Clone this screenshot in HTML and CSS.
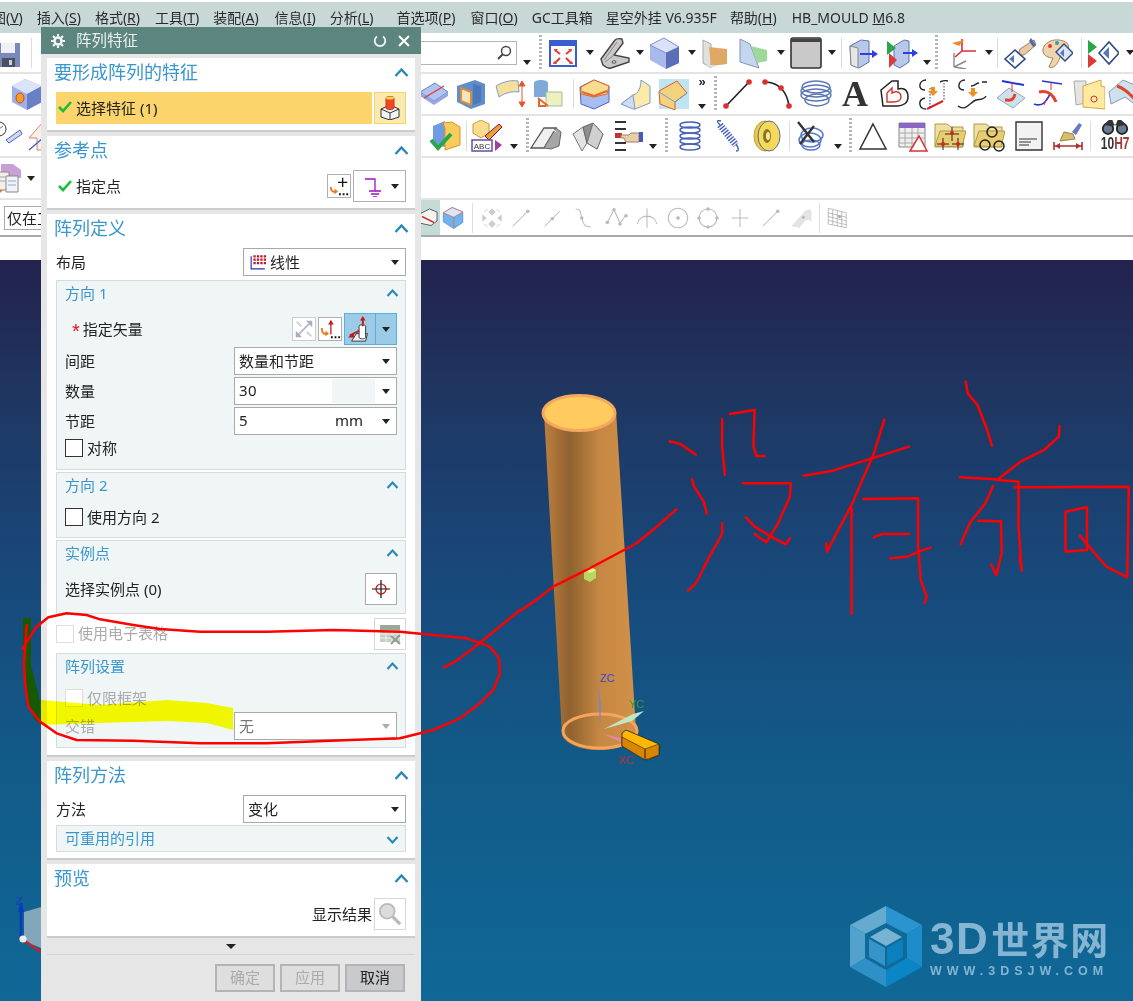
FILE: index.html
```html
<!DOCTYPE html>
<html lang="zh">
<head>
<meta charset="utf-8">
<title>阵列特征</title>
<link rel="stylesheet" href="styles.css">
</head>
<body>
<svg class="defs" width="0" height="0">
<defs>
<linearGradient id="cyl" x1="0" x2="1" y1="0" y2="0"><stop offset="0" stop-color="#bd803f"/><stop offset=".28" stop-color="#90622f"/><stop offset=".6" stop-color="#c58743"/><stop offset="1" stop-color="#d29149"/></linearGradient>
<symbol id="save" viewBox="0 0 32 32"><path d="M6 6h24v24H6z" fill="#7b89b8"/><path d="M11 6h14v10H11z" fill="#eef0f5"/><path d="M12 21h13v9H12z" fill="#4a4f62"/><path d="M19 23h3v5h-3z" fill="#cfd3de"/></symbol>
<symbol id="fit" viewBox="0 0 32 32"><rect x="3" y="4" width="26" height="25" fill="#f8fafe" stroke="#3b5bd0" stroke-width="2"/><path d="M3 5h26v4H3z" fill="#3b5bd0"/><path d="M8 13l5 4M24 13l-5 4M8 26l5-5M24 26l-5-5" stroke="#e0432c" stroke-width="2"/><path d="M7 12h4l-3 3zM25 12h-4l3 3zM6 27h4l-3-3zM26 27h-4l3-3z" fill="#e0432c"/></symbol>
<symbol id="bracket" viewBox="0 0 32 32"><path d="M2 22L16 3q2-2 7-1l1 4-9 12 15 3v4L12 31q-3 1-8-3z" fill="#c9c9c9" stroke="#444" stroke-width="1.400"/><path d="M5 23L18 5M6 25l9-7" fill="none" stroke="#8a8a8a"/><ellipse cx="15" cy="25" rx="2" ry="1.200" fill="#fff" stroke="#444"/></symbol>
<symbol id="cube" viewBox="0 0 32 32"><path d="M15 1L30 10v16l-13 6L1 23V8z" fill="#a9b9ea"/><path d="M1 8l14-7 15 9-13 6z" fill="#d9e2f8" stroke="#6c80c8" stroke-width=".8"/><path d="M17 16l13-6v16l-13 6z" fill="#5a6fb6"/></symbol>
<symbol id="sec1" viewBox="0 0 32 32"><path d="M4 3l8 4v24l-8-5z" fill="#e0e0e0" stroke="#aaa"/><path d="M10 10l18 2v15l-16 2z" fill="#dfa864"/><path d="M12 31l-6-3h14z" fill="#ddd"/></symbol>
<symbol id="sec2" viewBox="0 0 32 32"><path d="M3 2l10 5 9 24-19-6z" fill="#c4d6ee" stroke="#7f95c0"/><path d="M14 9l16 4v11l-10 2z" fill="#9ed99a"/></symbol>
<symbol id="sq" viewBox="0 0 32 32"><rect x="1" y="1" width="30" height="30" rx="2" fill="#c9c9c9" stroke="#333" stroke-width="1.600"/><path d="M1 2h30v3H1z" fill="#444"/></symbol>
<symbol id="mv1" viewBox="0 0 32 32"><path d="M3 9l11-6 8 1v21l-10 6-8-3z" fill="#b7c8ea" stroke="#5d74b2"/><path d="M3 9l8 2v20l-7-3z" fill="#e6e6e6" stroke="#888"/><path d="M13 17h13" stroke="#2c3fe0" stroke-width="2"/><path d="M25 13l6 4-6 4z" fill="#2c3fe0"/></symbol>
<symbol id="mv2" viewBox="0 0 32 32"><path d="M8 9l10-6 5 1v21l-9 6-6-3z" fill="#b7c8ea" stroke="#5d74b2"/><path d="M1 4l9 7-9 7z" fill="#2aa64a"/><path d="M3 16l8 7-8 8z" fill="#d83b3b"/><path d="M17 16h10" stroke="#2c3fe0" stroke-width="2"/><path d="M26 12l6 4-6 4z" fill="#2c3fe0"/></symbol>
<symbol id="csys" viewBox="0 0 32 32"><path d="M16 14V2M16 14l14 0M16 14l-7 6" stroke="#d83030" stroke-width="1.600" fill="none"/><path d="M6 6l12-3-5 6z" fill="#ee8a2c"/><path d="M8 30V16M8 30l12-6M8 30l12 2" stroke="#8a8a8a" stroke-width="1.400" fill="none"/></symbol>
<symbol id="hand" viewBox="0 0 32 32"><path d="M16 12l14-9 2 5-12 10h-6z" fill="#e8c9a4" stroke="#9a7f60"/><path d="M27 1l5 7-3 2-4-6z" fill="#5068b0"/><path d="M1 22l10-9 10 9-10 9z" fill="#fff" stroke="#30497f" stroke-width="1.600"/><path d="M10 18l-5 4 5 4z" fill="#5478c0"/></symbol>
<symbol id="pal" viewBox="0 0 32 32"><path d="M2 12C4 3 18 0 26 6c4 4 0 12-6 12-3 8-6 14-12 12l4-9C7 21 1 18 2 12z" fill="#efd5ac" stroke="#9d8659"/><circle cx="9" cy="9" r="2" fill="#e33"/><circle cx="16" cy="6" r="2" fill="#39c"/><circle cx="22" cy="9" r="2" fill="#ec3"/><path d="M15 15l8-8 9 9-8 8z" fill="#dce6f5" stroke="#30497f" stroke-width="1.400"/><path d="M23 12l-4 4 4 4z" fill="#5478c0"/></symbol>
<symbol id="dia" viewBox="0 0 32 32"><path d="M1 3l9 7-9 7z" fill="#2aa64a"/><path d="M1 17l9 7-9 7z" fill="#d83b3b"/><path d="M12 16L22 5l10 11-10 11z" fill="#fff" stroke="#30497f" stroke-width="1.600"/><path d="M22 10l-6 6 6 6z" fill="#5478c0"/></symbol>
<symbol id="holecube" viewBox="0 0 32 32"><path d="M14 1l17 7v16l-15 8L1 24V8z" fill="#9eb1e6"/><path d="M1 8l13-7 17 7-15 8z" fill="#dbe3f8"/><path d="M16 16l15-8v16l-15 8z" fill="#6a80c4"/><ellipse cx="9" cy="20" rx="4" ry="5" fill="#f0a020" stroke="#d8452a"/></symbol>
<symbol id="plane" viewBox="0 0 32 32"><path d="M2 14L17 5l13 9-14 9z" fill="#b2c3ee" stroke="#6d82c6"/><path d="M2 14v4l14 9v-4zM30 14v4l-14 9v-4z" fill="#93a8e0"/><path d="M6 20l20-12" stroke="#d83b3b" stroke-width="1.400"/></symbol>
<symbol id="frame" viewBox="0 0 32 32"><path d="M2 8l18-6 10 4v20l-14 5L2 24z" fill="#5f8ecb"/><path d="M6 10l10 4v13L6 23z" fill="#f6e6c0" stroke="#dc8b3e" stroke-width="2"/><path d="M18 6l8 2v16l-8 3z" fill="#4a78b8"/></symbol>
<symbol id="strip" viewBox="0 0 32 32"><path d="M2 8c8-5 16-6 22-5l1 11C17 13 11 15 5 19z" fill="#f3e09a" stroke="#7f9bcf"/><path d="M28 5v22M25 8l3-5 3 5zM25 24l3 5 3-5z" stroke="#e4572e" fill="#e4572e"/></symbol>
<symbol id="cylb" viewBox="0 0 32 32"><path d="M2 5c0-4 14-4 14 0v14H2z" fill="#7fa9d8"/><path d="M14 14h16v14H14z" fill="#eef0bf" stroke="#9bbf9b"/><path d="M6 20l10 8M14 28h-7v-7" stroke="#e4672e" stroke-width="2" fill="none"/></symbol>
<symbol id="blend" viewBox="0 0 32 32"><path d="M1 9L15 2l15 6v16l-15 7L2 26z" fill="#a8bdf0" stroke="#4a67c4"/><path d="M2 9l13-7 15 6-2 8-13 3-13-3z" fill="#f9dc8c" stroke="#e0672e"/><path d="M3 14l12 4 13-5" stroke="#e0672e" fill="none" stroke-width="2"/></symbol>
<symbol id="sweep" viewBox="0 0 32 32"><path d="M2 26l12-9C20 16 22 8 22 2l9 6v17l-15 6z" fill="#fbeaa8" stroke="#7c9ad0"/><path d="M2 26l12 5h2l-2-14z" fill="#cfdcf5" stroke="#7c9ad0"/></symbol>
<symbol id="boxc" viewBox="0 0 32 32"><path d="M1 1h30v30H1z" fill="#bfe4f2"/><path d="M1 13L19 3l10 12-12 9v8L2 26z" fill="#f1d37e" stroke="#dd5c2e"/><path d="M1 14l16 10 12-9" stroke="#7c9ad0" fill="none"/></symbol>
<symbol id="line" viewBox="0 0 32 32"><path d="M4 28L27 4" stroke="#222" stroke-width="1.600"/><circle cx="4" cy="28" r="2.800" fill="#d83030"/><circle cx="27" cy="4" r="2.800" fill="#d83030"/></symbol>
<symbol id="arc" viewBox="0 0 32 32"><path d="M4 4c14 0 22 10 24 24" stroke="#222" stroke-width="1.600" fill="none"/><circle cx="4" cy="4" r="2.800" fill="#d83030"/><circle cx="20" cy="10" r="2.800" fill="#d83030"/><circle cx="28" cy="28" r="2.800" fill="#d83030"/></symbol>
<symbol id="helixh" viewBox="0 0 32 32"><g fill="none" stroke="#5b78b4" stroke-width="1.400"><ellipse cx="16" cy="9" rx="14" ry="6"/><ellipse cx="16" cy="13" rx="15" ry="6"/><ellipse cx="16" cy="17" rx="15" ry="6"/><ellipse cx="17" cy="22" rx="12" ry="6"/></g></symbol>
<symbol id="heart" viewBox="0 0 32 32"><path d="M3 12L14 3h6v8c8-2 10 3 10 8 0 6-5 9-11 9H5z" fill="#fff" stroke="#222" stroke-width="1.500"/><path d="M9 15l5-5v5c6-3 9 0 9 4s-4 5-8 5H9z" fill="none" stroke="#d83030" stroke-width="1.400"/></symbol>
<symbol id="cur1" viewBox="0 0 32 32"><path d="M9 2C2 2 0 12 8 12M23 4c4-2 8-1 8-1M9 31C2 31 0 22 8 20" fill="none" stroke="#222" stroke-width="1.400"/><path d="M10 31l16-8" stroke="#e02020" stroke-width="2"/><path d="M13 10v20M27 5v17" stroke="#2233cc" stroke-dasharray="1.500 1.500"/><path d="M14 9h4v4h3l-5 5-5-5h3z" fill="#f09020"/></symbol>
<symbol id="cur2" viewBox="0 0 32 32"><path d="M9 2C2 2 0 12 8 12M15 8c4 0 5-3 8-3M26 4h5M2 28c8 6 12-4 18-6 4-1 8 0 10-4" fill="none" stroke="#222" stroke-width="1.400"/><path d="M15 10h4v4h3l-5 5-5-5h3z" fill="#f09020"/></symbol>
<symbol id="proj1" viewBox="0 0 32 32"><path d="M7 3l22 4" stroke="#2233dd" stroke-width="2"/><path d="M2 20L14 10l16 10-12 10z" fill="#cfe0ee" stroke="#8ab"/><path d="M10 22c4 0 8 2 10-6" stroke="#e0452a" stroke-width="3" fill="none"/><path d="M17 4v10" stroke="#d83030"/></symbol>
<symbol id="proj2" viewBox="0 0 32 32"><path d="M10 3l20 3M2 26c10 4 14-6 16-10" stroke="#2233dd" stroke-width="1.600" fill="none"/><path d="M7 14c8-2 14 2 17 10" stroke="#e0452a" stroke-width="3" fill="none"/><path d="M19 4v8M15 20l-3 7" stroke="#d83030"/></symbol>
<symbol id="parts" viewBox="0 0 32 32"><path d="M1 3h12v22l-10 2z" fill="#e4e4e4" stroke="#aaa"/><path d="M10 8l18-6v6l4 1v22l-22-2z" fill="#fbeaa0" stroke="#e0a040"/><circle cx="21" cy="21" r="3" fill="none" stroke="#d83030"/></symbol>
<symbol id="sheet" viewBox="0 0 32 32"><path d="M2 14L16 2l14 6v20l-12-9L4 26z" fill="#cfe0ee" stroke="#89a"/><path d="M10 8c6 2 12 6 20 16" stroke="#e0452a" stroke-width="3" fill="none"/></symbol>
<symbol id="house" viewBox="0 0 32 32"><circle cx="8" cy="9" r="7" fill="#fff" stroke="#333"/><path d="M8 4v5l4-3" stroke="#2a9a4a" fill="none"/><path d="M15 20l14-10 2 4-13 9z" fill="#cfd8f5" stroke="#5068c0"/><circle cx="3" cy="26" r="5" fill="#2a9a4a"/><path d="M0 22l8 3" stroke="#d83030"/></symbol>
<symbol id="arrowup" viewBox="0 0 32 32"><path d="M2 18L16 2l14 16h-8v12h-12V18z" fill="#f8f0ea" stroke="#e08070"/><path d="M2 30l14-12" stroke="#4060c0" stroke-width="1.400"/></symbol>
<symbol id="check" viewBox="0 0 32 32"><path d="M4 6l12-5v26l-12-3z" fill="#6f9be0"/><path d="M14 3l9-1 8 5v18l-15 5V8z" fill="#f6cd5a" stroke="#e09030"/><path d="M2 20l7 8L22 14" stroke="#2aa64a" stroke-width="4" fill="none"/></symbol>
<symbol id="abc" viewBox="0 0 32 32"><path d="M10 0l8 4v9l-8 5-8-5V4z" fill="#f9dc8c" stroke="#c79a3a"/><path d="M14 16L28 4l3 3-13 13z" fill="#e4a23a" stroke="#904"/><rect x="1" y="20" width="20" height="11" fill="#fff" stroke="#5a3fa0" stroke-width="1.400"/><text x="11" y="29" font-size="8" font-family="Liberation Sans" text-anchor="middle" fill="#333">ABC</text><path d="M24 20l7 5-7 6z" fill="#a03fa0"/></symbol>
<symbol id="fold1" viewBox="0 0 32 32"><path d="M1 28L14 8h12L14 28z" fill="#f0f0f0" stroke="#555" stroke-width="1.300"/><path d="M14 28L26 8l5 4-2 14-8 3z" fill="#a6a6a6" stroke="#666"/><path d="M20 14l4-4 2 2" stroke="#eee" fill="none"/></symbol>
<symbol id="fold2" viewBox="0 0 32 32"><path d="M1 14l10-7 4 16-5 8z" fill="#e2e2e2" stroke="#777"/><path d="M11 7l10-4 10 11-6 15-10-6z" fill="#8f8f8f" stroke="#666"/><path d="M21 3l-6 20" stroke="#555"/><path d="M21 3l10 11-6 15-10-6z" fill="#d0d0d0" stroke="#777"/></symbol>
<symbol id="ehand" viewBox="0 0 32 32"><path d="M3 2h11M3 30h11M3 9h11v0M3 23h11" stroke="#333" stroke-width="1.800"/><rect x="3" y="13" width="7" height="5" fill="#c83030"/><path d="M9 15h8l2-2h8v9H14l-2-4H9z" fill="#e8cfaa" stroke="#a08060"/><path d="M27 12h4v10h-4z" fill="#4458c0"/></symbol>
<symbol id="spr" viewBox="0 0 32 32"><g fill="none" stroke="#4660b8" stroke-width="1.500"><ellipse cx="16" cy="5" rx="10" ry="3"/><ellipse cx="16" cy="10" rx="10" ry="3"/><ellipse cx="16" cy="16" rx="10" ry="3"/><ellipse cx="16" cy="21" rx="10" ry="3"/><ellipse cx="16" cy="27" rx="10" ry="3"/></g></symbol>
<symbol id="spr2" viewBox="0 0 32 32"><path d="M8 5l16 20" stroke="#4660b8" stroke-width="7" stroke-dasharray="1.400 1.400"/><path d="M8 5C4 1 5 0 9 1M24 24c2 3 4 7 0 7" fill="none" stroke="#4660b8" stroke-width="1.400"/></symbol>
<symbol id="tape" viewBox="0 0 32 32"><ellipse cx="14" cy="16" rx="11" ry="15" fill="#e9c94c" stroke="#c6a22c"/><ellipse cx="18" cy="16" rx="11" ry="15" fill="#f5d95c" stroke="#5a6a90"/><ellipse cx="16" cy="16" rx="4" ry="7" fill="#8c7420"/><ellipse cx="17" cy="16" rx="2" ry="4" fill="#f5e9a0"/></symbol>
<symbol id="xspr" viewBox="0 0 32 32"><g fill="none" stroke="#5a78c8" stroke-width="1.500"><ellipse cx="18" cy="15" rx="11" ry="7"/><ellipse cx="16" cy="20" rx="11" ry="7"/><ellipse cx="17" cy="25" rx="9" ry="5"/></g><path d="M4 2l16 20M20 6L6 24" stroke="#333" stroke-width="2.400"/></symbol>
<symbol id="tri" viewBox="0 0 32 32"><path d="M16 4L29 29H3z" fill="#fff" stroke="#333" stroke-width="1.500"/></symbol>
<symbol id="table" viewBox="0 0 32 32"><path d="M2 3h26v24H2z" fill="#efefef" stroke="#888"/><path d="M2 3h26v5H2z" fill="#8a66c8"/><path d="M2 13h26M2 18h26M2 23h26M8 8v19M15 8v19M21 8v19" stroke="#aaa"/><path d="M22 16l8 15H13z" fill="#fff" stroke="#d83030" stroke-width="1.500"/></symbol>
<symbol id="folder1" viewBox="0 0 32 32"><path d="M1 4h12l4 3h12v20H1z" fill="#f0e0a0" stroke="#b09848"/><path d="M1 26l5-15h26l-4 16z" fill="#e8cd70" stroke="#b09848"/><path d="M18 7v14M11 14h14M9 18v12M3 24h12M24 18v12M18 24h12" stroke="#222"/><circle cx="18" cy="13" r="2" fill="#e02020"/><circle cx="9" cy="24" r="2" fill="#e02020"/><circle cx="24" cy="24" r="2" fill="#e02020"/></symbol>
<symbol id="folder2" viewBox="0 0 32 32"><path d="M1 4h12l4 3h12v20H1z" fill="#f0e0a0" stroke="#b09848"/><path d="M1 26l5-15h26l-4 16z" fill="#e8cd70" stroke="#b09848"/><circle cx="19" cy="12" r="5" fill="none" stroke="#222" stroke-width="1.500"/><circle cx="12" cy="25" r="5" fill="none" stroke="#222" stroke-width="1.500"/><circle cx="26" cy="26" r="5" fill="none" stroke="#222" stroke-width="1.500"/></symbol>
<symbol id="doc" viewBox="0 0 32 32"><path d="M3 2h26v28H3z" fill="#f2f2f2" stroke="#333" stroke-width="1.400"/><path d="M6 19h18M6 22h12M6 25h10" stroke="#333"/></symbol>
<symbol id="brush" viewBox="0 0 32 32"><path d="M20 12l7-9 3 2-6 10z" fill="#6a78c8"/><path d="M12 12l9 2 2 5-15 2z" fill="#d8bd70" stroke="#a08040"/><path d="M2 26h28M2 22v8M30 22v8" stroke="#b03030" stroke-width="1.600"/><path d="M3 26l5-3v6zM29 26l-5-3v6z" fill="#b03030"/></symbol>
<symbol id="bino" viewBox="0 0 32 18"><circle cx="8" cy="11" r="6" fill="#6a7a90" stroke="#222" stroke-width="2"/><circle cx="24" cy="11" r="6" fill="#6a7a90" stroke="#222" stroke-width="2"/><path d="M3 6L9 1h4l2 5h2l2-5h4l6 5-8 2-5-1-5 1z" fill="#333"/></symbol>
<symbol id="copy" viewBox="0 0 32 32"><path d="M8 2h12l8 6v8H8z" fill="#c8a0d8"/><path d="M2 10h14v18H2z" fill="#f4f0e8" stroke="#888"/><path d="M13 14h12v16H13z" fill="#f0f4f8" stroke="#888"/><path d="M4 15h9M4 19h9M15 19h8M15 23h8" stroke="#9ab"/><path d="M1 28h9l-4 4z" fill="#e8782a"/></symbol>
<symbol id="solid" viewBox="0 0 32 32"><path d="M6 10L18 4l10 4v12l-8 6-14-3z" fill="#f2f4f2" stroke="#333"/><path d="M8 14L24 22" stroke="#d83030" stroke-width="2"/></symbol>
<symbol id="solid2" viewBox="0 0 32 32"><path d="M3 9L15 2l14 6v14l-12 8L3 21z" fill="#6db4ec" stroke="#5a88c0"/><path d="M3 9l14 6 12-7-14-6z" fill="#d8e8f6" stroke="#e06060"/><path d="M17 15v15" stroke="#e06060"/></symbol>
<symbol id="g1" viewBox="0 0 32 32"><g fill="#ccc"><path d="M16 3l5 5-5 5-5-5zM16 19l5 5-5 5-5-5zM3 11l6 5-6 5zM29 11l-6 5 6 5z"/></g><path d="M6 8l4-4M22 4l4 4M6 24l4 4M22 28l4-4" stroke="#bbb"/></symbol>
<symbol id="g2" viewBox="0 0 32 32"><path d="M5 27L25 7" stroke="#bbb" stroke-width="1.400"/><circle cx="25" cy="7" r="2.400" fill="#bbb"/></symbol>
<symbol id="g3" viewBox="0 0 32 32"><path d="M5 27L25 7" stroke="#bbb" stroke-width="1.400"/><circle cx="15" cy="17" r="2.400" fill="#bbb"/></symbol>
<symbol id="g4" viewBox="0 0 32 32"><path d="M5 4c8 0 6 6 8 12s2 12 12 12" fill="none" stroke="#bbb" stroke-width="1.400"/><circle cx="13" cy="16" r="2.400" fill="#bbb"/></symbol>
<symbol id="g5" viewBox="0 0 32 32"><path d="M3 22L12 5l8 18 8-11" fill="none" stroke="#bbb" stroke-width="1.400"/><circle cx="12" cy="5" r="2.400" fill="#bbb"/><circle cx="3" cy="22" r="2.400" fill="#bbb"/><circle cx="20" cy="24" r="2.400" fill="#bbb"/><circle cx="28" cy="13" r="2.400" fill="#bbb"/></symbol>
<symbol id="g6" viewBox="0 0 32 32"><path d="M3 24C5 10 27 10 29 24M16 3v26" fill="none" stroke="#bbb" stroke-width="1.400"/></symbol>
<symbol id="g7" viewBox="0 0 32 32"><circle cx="16" cy="16" r="13" fill="none" stroke="#bbb" stroke-width="1.400"/><path d="M16 13l3 3-3 3-3-3z" fill="#bbb"/></symbol>
<symbol id="g8" viewBox="0 0 32 32"><circle cx="16" cy="16" r="12" fill="none" stroke="#bbb" stroke-width="1.400"/><circle cx="16" cy="4" r="2.400" fill="#bbb"/><circle cx="4" cy="16" r="2.400" fill="#bbb"/><circle cx="28" cy="16" r="2.400" fill="#bbb"/><circle cx="16" cy="28" r="2.400" fill="#bbb"/></symbol>
<symbol id="g9" viewBox="0 0 32 32"><path d="M16 4v24M5 16h22" stroke="#bbb" stroke-width="1.400"/></symbol>
<symbol id="g10" viewBox="0 0 32 32"><path d="M3 27L22 6c5-3 9-1 8 2v14c-2-4-5-4-8-3l-8 10z" fill="#e4e4e4"/><circle cx="19" cy="15" r="2" fill="#bbb"/></symbol>
<symbol id="g11" viewBox="0 0 32 32"><path d="M3 3l24 6v20L3 24zM9 5v20M15 6v21M21 8v20M3 9l24 6M3 14l24 6M3 19l24 6" fill="none" stroke="#aaa"/><circle cx="18" cy="14" r="2" fill="#aaa"/></symbol>
</defs>
</svg>

<div class="app">
  <nav class="menu">
    <span class="mi mn8">图(<u>V</u>)</span>
    <span class="mi mm14">插入(<u>S</u>)</span>
    <span class="mi mm14">格式(<u>R</u>)</span>
    <span class="mi mm15">工具(<u>T</u>)</span>
    <span class="mi mm14">装配(<u>A</u>)</span>
    <span class="mi mm16">信息(<u>I</u>)</span>
    <span class="mi mm14">分析(<u>L</u>)</span>
    <span class="mi mm23">首选项(<u>P</u>)</span>
    <span class="mi mm15">窗口(<u>O</u>)</span>
    <span class="mi mm14">GC工具箱</span>
    <span class="mi mm13">星空外挂 V6.935F</span>
    <span class="mi mm13">帮助(<u>H</u>)</span>
    <span class="mi mm15">HB_MOULD <u>M</u>6.8</span>
  </nav>

  <div class="tb r1">
    <svg class="ic mn10"><use href="#save"/></svg><i class="sep m9"></i>
    <div class="search"><svg class="mag" viewBox="0 0 16 16"><circle cx="10" cy="6" r="4.500" fill="#fff" stroke="#444" stroke-width="1.400"/><path d="M7 9l-5 5" stroke="#444" stroke-width="2"/></svg></div>
    <b class="dd low m6"></b><i class="dot m8"></i>
    <svg class="ic m5"><use href="#fit"/></svg><b class="dd m7"></b>
    <svg class="ic m5"><use href="#bracket"/></svg><b class="dd m5"></b>
    <svg class="ic m5"><use href="#cube"/></svg><b class="dd m7"></b>
    <svg class="ic m3"><use href="#sec1"/></svg>
    <svg class="ic m6"><use href="#sec2"/></svg><b class="dd m8"></b>
    <svg class="ic m5"><use href="#sq"/></svg><b class="dd m6"></b><i class="sep m5"></i>
    <svg class="ic m5"><use href="#mv1"/></svg>
    <svg class="ic m7"><use href="#mv2"/></svg><b class="dd low m5"></b><i class="dot m4"></i>
    <svg class="ic m8"><use href="#csys"/></svg><b class="dd m7"></b><i class="sep m4"></i>
    <svg class="ic m6"><use href="#hand"/></svg>
    <svg class="ic m5"><use href="#pal"/></svg><i class="sep m8"></i>
    <svg class="ic m5"><use href="#dia"/></svg><b class="dd m7"></b>
  </div>

  <div class="tb r2">
    <svg class="ic m11"><use href="#holecube"/></svg>
    <svg class="ic m375"><use href="#plane"/></svg>
    <svg class="ic m5"><use href="#frame"/></svg>
    <svg class="ic m7"><use href="#strip"/></svg>
    <svg class="ic m6"><use href="#cylb"/></svg><i class="sep m9"></i>
    <svg class="ic m5"><use href="#blend"/></svg>
    <svg class="ic m8"><use href="#sweep"/></svg>
    <svg class="ic m7"><use href="#boxc"/></svg>
    <div class="more m7"><span class="chev">»</span><b class="dd"></b></div>
    <i class="dot m7"></i>
    <svg class="ic m5"><use href="#line"/></svg>
    <svg class="ic m7"><use href="#arc"/></svg>
    <svg class="ic m7"><use href="#helixh"/></svg>
    <span class="bigA m7">A</span>
    <svg class="ic m7"><use href="#heart"/></svg>
    <svg class="ic m7"><use href="#cur1"/></svg>
    <svg class="ic m7"><use href="#cur2"/></svg>
    <svg class="ic m7"><use href="#proj1"/></svg>
    <svg class="ic m5"><use href="#proj2"/></svg>
    <svg class="ic m9"><use href="#parts"/></svg>
    <svg class="ic m2"><use href="#sheet"/></svg>
  </div>

  <div class="tb r3">
    <svg class="ic mn9"><use href="#house"/></svg>
    <svg class="ic m4"><use href="#arrowup"/></svg>
    <svg class="ic m370"><use href="#check"/></svg><i class="sep m5"></i>
    <svg class="ic m4"><use href="#abc"/></svg><b class="dd low m7"></b><i class="dot m8"></i>
    <svg class="ic m1"><use href="#fold1"/></svg>
    <svg class="ic m10"><use href="#fold2"/></svg>
    <svg class="ic m8"><use href="#ehand"/></svg><b class="dd low m5"></b><i class="dot m8"></i>
    <svg class="ic m6"><use href="#spr"/></svg>
    <svg class="ic m6"><use href="#spr2"/></svg>
    <svg class="ic m7"><use href="#tape"/></svg><i class="sep m6"></i>
    <svg class="ic m4"><use href="#xspr"/></svg><b class="dd low m8"></b><i class="dot m7"></i>
    <svg class="ic m5"><use href="#tri"/></svg>
    <svg class="ic m8"><use href="#table"/></svg>
    <svg class="ic m5"><use href="#folder1"/></svg>
    <svg class="ic m7"><use href="#folder2"/></svg>
    <svg class="ic m8"><use href="#doc"/></svg>
    <svg class="ic m7"><use href="#brush"/></svg><i class="sep m6"></i>
    <div class="tol m6"><svg class="bino"><use href="#bino"/></svg><span><em>10</em>H7</span></div>
  </div>

  <div class="tb r4">
    <svg class="ic mn7"><use href="#copy"/></svg><b class="dd m2"></b>
  </div>

  <div class="tb r5">
    <div class="sel m4">仅在工</div>
    <div class="hl m332"><svg class="ic24"><use href="#solid"/></svg></div>
    <svg class="ic24 m1"><use href="#solid2"/></svg><i class="sep m7"></i>
    <svg class="ic24 m7"><use href="#g1"/></svg>
    <svg class="ic24 m5"><use href="#g2"/></svg>
    <svg class="ic24 m8"><use href="#g3"/></svg>
    <svg class="ic24 m7"><use href="#g4"/></svg>
    <svg class="ic24 m9"><use href="#g5"/></svg>
    <svg class="ic24 m6"><use href="#g6"/></svg>
    <svg class="ic24 m7"><use href="#g7"/></svg>
    <svg class="ic24 m6"><use href="#g8"/></svg>
    <svg class="ic24 m8"><use href="#g9"/></svg>
    <svg class="ic24 m7"><use href="#g2"/></svg>
    <svg class="ic24 m6"><use href="#g10"/></svg><i class="sep m6"></i>
    <svg class="ic24 m6"><use href="#g11"/></svg>
  </div>

  <div class="blank"></div>

  <main class="viewport">
    <svg class="scene" viewBox="0 0 1133 741">
      <g transform="translate(0 -260)">
        <path d="M23 618h8v47l9 37 2 23-8-6-9-30-2-23z" fill="#175900"/>
        <path d="M24 912l17-5v41l-17-7z" fill="#a8bcc8" opacity=".75"/>
        <path d="M22 939l19 13" stroke="#d02020" stroke-width="2.400"/>
        <path d="M21 903v34" stroke="#0a3ac0" stroke-width="2.600"/>
        <path d="M18 912l3-9 3 9z" fill="#0a3ac0"/>
        <circle cx="23" cy="939" r="3.600" fill="#eee"/>
        <text x="16" y="905" class="tz">Z</text>
        <path d="M544 413L562 735A37 17 0 0 0 636 731L616 411Z" fill="url(#cyl)"/>
        <ellipse cx="579" cy="413" rx="36" ry="17.500" fill="#ffca5e" stroke="#f5a85c" stroke-width="3"/>
        <ellipse cx="600" cy="731" rx="37" ry="17" fill="none" stroke="#f6a65a" stroke-width="3"/>
        <path d="M598 683l2 44 1-20z" fill="#6f86d8"/>
        <path d="M604 729l29-15 11-3-12 10z" fill="#bfe7c4"/>
        <path d="M603 734l18 8 19 9-20-13z" fill="#e58aa0"/>
        <path d="M622 733l4-3 33 14v11l-11 5-26-14z" fill="#ffb800" stroke="#222" stroke-width=".8"/>
        <path d="M645 760v-11l14-5v11zM622 746l23 14v-11l-23-12z" fill="#d88600" stroke="#222" stroke-width=".6"/>
        <path d="M584 570l6-3 6 3v8l-6 4-6-3z" fill="#b6d860"/>
        <path d="M584 570l6-3 6 3-6 3z" fill="#f6f080"/>
        <text x="600" y="682" class="tzc">ZC</text>
        <text x="629" y="708" class="tyc">YC</text>
        <text x="619" y="764" class="txc">XC</text>
        <g transform="translate(850 906)">
          <path d="M36 0L36 40 0 19z" fill="#66aad0"/>
          <path d="M36 0L72 19 36 40z" fill="#2a94cf"/>
          <path d="M72 19V61L36 40z" fill="#1c8dca"/>
          <path d="M72 61L36 81V40z" fill="#0a85c6"/>
          <path d="M36 81L0 61 36 40z" fill="#2e90c7"/>
          <path d="M0 61V19L36 40z" fill="#52a2cd"/>
          <path d="M36 17L57 28V52L36 64 15 52V28z" fill="#0f6a97"/>
          <path d="M36 22L52 31 36 40 20 31z" fill="#79b3d3"/>
          <path d="M19 33l16 9v18l-16-9z" fill="#3794c8"/>
          <path d="M37 42l16-9v18l-16 9z" fill="#0b80bf"/>
        </g>
      </g>
    </svg>
    <div class="logo"><div class="logo-cn"><strong>3D</strong>世界网</div><div class="logo-en">WWW.3DSJW.COM</div></div>
  </main>
</div>

<section class="dialog">
  <header class="dlg-title">
    <svg class="gear" viewBox="0 0 16 16"><circle cx="8" cy="8" r="4" fill="none" stroke="#f1f5f4" stroke-width="3"/><path d="M8 0v3M8 13v3M0 8h3M13 8h3M2.300 2.300l2 2M11.700 11.700l2 2M2.300 13.700l2-2M11.700 4.300l2-2" stroke="#f1f5f4" stroke-width="2.400"/></svg>
    <span class="dlg-name">阵列特征</span>
    <svg class="rst" viewBox="0 0 14 14"><path d="M4 2.500A5.300 5.300 0 1 0 10 2.500" fill="none" stroke="#f1f5f4" stroke-width="1.800"/></svg>
    <svg class="cls" viewBox="0 0 14 14"><path d="M2 2l10 10M12 2L2 12" stroke="#fff" stroke-width="2"/></svg>
  </header>
  <div class="dlg-body">
    <div class="sec">
      <div class="sec-head"><span>要形成阵列的特征</span><svg class="cv"><path d="M1.500 9L7.500 2.500 13.500 9" /></svg></div>
      <div class="sel-row">
        <div class="sel-bar"><svg class="ok" viewBox="0 0 14 12"><path d="M1 6l4 4 8-9" /></svg>选择特征 (1)</div>
        <div class="sel-btn"><svg viewBox="0 0 24 24"><path d="M3 13l9-4 9 4v8l-9 3-9-3z" fill="#f3f3f3" stroke="#333"/><path d="M3 13l9 4 9-4M12 17v7" fill="none" stroke="#333"/><path d="M8 2c0-2 8-2 8 0v10c0 2-8 2-8 0z" fill="#ee4a1e" stroke="#c33"/><ellipse cx="12" cy="2" rx="4" ry="1.500" fill="#f5d840"/></svg></div>
      </div>
    </div>

    <div class="sec">
      <div class="sec-head"><span>参考点</span><svg class="cv"><path d="M1.500 9L7.500 2.500 13.500 9" /></svg></div>
      <div class="sel-row center">
        <svg class="ok ok-p" viewBox="0 0 14 12"><path d="M1 6l4 4 8-9" /></svg><span class="lbl grow">指定点</span>
        <div class="mini"><svg viewBox="0 0 24 24"><path d="M16 3v10M11 8h10" stroke="#111" stroke-width="1.400"/><path d="M3 13c0 5 3 6 6 5" fill="none" stroke="#e8781e" stroke-width="2"/><path d="M7 15l4 3-4 3z" fill="#e8781e"/><path d="M12 20h2v2h-2zM16 20h2v2h-2zM20 20h2v2h-2z" fill="#111"/></svg></div>
        <div class="pt-combo"><svg viewBox="0 0 22 22"><path d="M3 4h10v12M7 16h12M9 19h8M11 22h4" fill="none" stroke="#a010c0" stroke-width="1.300"/></svg><b class="dd"></b></div>
      </div>
    </div>

    <div class="sec sec-main">
      <div class="sec-head"><span>阵列定义</span><svg class="cv"><path d="M1.500 9L7.500 2.500 13.500 9" /></svg></div>
      <div class="f-row">
        <span class="lbl">布局</span>
        <div class="combo wide"><svg class="grid" viewBox="0 0 14 14"><path d="M3 1h2v2H3zM6 1h2v2H6zM9 1h2v2H9zM12 1h2v2h-2zM3 4h2v2H3zM6 4h2v2H6zM9 4h2v2H9zM12 4h2v2h-2zM3 7h2v2H3zM6 7h2v2H6zM9 7h2v2H9zM12 7h2v2h-2z" fill="#c01820"/><path d="M1 2v11h12" fill="none" stroke="#2030c0"/></svg><span class="grow">线性</span><b class="dd"></b></div>
      </div>

      <div class="grp g-dir1">
        <div class="g-head"><span>方向 1</span><svg class="cv cv-s"><path d="M1.500 8L6.500 2.500 11.500 8" /></svg></div>
        <div class="vec-row">
          <span class="ast">*</span><span class="lbl grow">指定矢量</span>
          <div class="mini mini-off"><svg viewBox="0 0 24 24"><path d="M4 20L20 4" stroke="#b5b8c8" stroke-width="2"/><path d="M14 3h7v7zM3 14v7h7z" fill="#a9adc0"/><path d="M4 4l5 5M15 15l5 5" stroke="#cfd2dc" stroke-width="2"/></svg></div>
          <div class="mini"><svg viewBox="0 0 24 24"><path d="M13 18V5" stroke="#c81818" stroke-width="1.400"/><path d="M10 7l3-5 3 5z" fill="#c81818"/><path d="M3 11c0 6 3 7 6 6" fill="none" stroke="#e8781e" stroke-width="2"/><path d="M7 14l4 3-4 3z" fill="#e8781e"/><path d="M13 20h2v2h-2zM17 20h2v2h-2zM21 20h2v2h-2z" fill="#111"/></svg></div>
          <div class="vbtn"><svg viewBox="0 0 30 30"><path d="M4 22l12-6" stroke="#c81818" stroke-width="2"/><path d="M2 24l6-5 1 5z" fill="#c81818"/><path d="M6 28l5-8h12l-2 8z" fill="#f0f0f0" stroke="#333"/><path d="M14 12c0-2 7-2 7 0v12c0 2-7 2-7 0z" fill="#fff" stroke="#333"/><path d="M18 12V3" stroke="#c81818" stroke-width="2"/><path d="M15 6l3-5 3 5z" fill="#c81818"/></svg></div>
          <div class="vdd"><b class="dd"></b></div>
        </div>
        <div class="g-row"><span class="lbl">间距</span><div class="combo"><span class="grow">数量和节距</span><b class="dd"></b></div></div>
        <div class="g-row"><span class="lbl">数量</span><div class="combo"><span class="num">30</span><span class="swatch"></span><b class="dd"></b></div></div>
        <div class="g-row"><span class="lbl">节距</span><div class="combo"><span class="grow num">5</span><span class="unit">mm</span><b class="dd"></b></div></div>
        <label class="chk chk-sym"><i class="box"></i><span>对称</span></label>
      </div>

      <div class="grp g-dir2">
        <div class="g-head"><span>方向 2</span><svg class="cv cv-s"><path d="M1.500 8L6.500 2.500 11.500 8" /></svg></div>
        <label class="chk chk-d2"><i class="box"></i><span>使用方向 2</span></label>
      </div>

      <div class="grp g-inst">
        <div class="g-head"><span>实例点</span><svg class="cv cv-s"><path d="M1.500 8L6.500 2.500 11.500 8" /></svg></div>
        <div class="i-row"><span class="lbl grow">选择实例点 (0)</span><div class="cross"><svg viewBox="0 0 22 22"><circle cx="11" cy="11" r="5" fill="none" stroke="#e01010" stroke-width="1.200"/><path d="M11 2v18M2 11h18" stroke="#111" stroke-width="1.200"/></svg></div></div>
      </div>

      <div class="ss-row">
        <i class="box off"></i><span class="lbl-off grow">使用电子表格</span>
        <div class="ss-btn"><svg viewBox="0 0 24 24"><path d="M2 3h20v17H2z" fill="#c6cfc6"/><path d="M2 3h20v5H2z" fill="#9aa89a"/><path d="M2 12h20M2 16h20M8 8v12M14 8v12" stroke="#eef2ee"/><path d="M13 14l9 8M22 13l-9 9" stroke="#8aa08a" stroke-width="2"/></svg></div>
      </div>

      <div class="grp g-set">
        <div class="g-head"><span>阵列设置</span><svg class="cv cv-s"><path d="M1.500 8L6.500 2.500 11.500 8" /></svg></div>
        <label class="chk chk-fr"><i class="box off"></i><span class="lbl-off">仅限框架</span></label>
        <div class="g-row g-stag"><span class="lbl-off">交错</span><div class="combo combo-off"><span class="grow">无</span><b class="dd"></b></div></div>
      </div>
    </div>

    <div class="sec">
      <div class="sec-head"><span>阵列方法</span><svg class="cv"><path d="M1.500 9L7.500 2.500 13.500 9" /></svg></div>
      <div class="f-row"><span class="lbl">方法</span><div class="combo wide"><span class="grow">变化</span><b class="dd"></b></div></div>
      <div class="grp g-reuse"><span>可重用的引用</span><svg class="cv cv-s"><path d="M1.500 3L6.500 8.500 11.500 3" /></svg></div>
    </div>

    <div class="sec">
      <div class="sec-head"><span>预览</span><svg class="cv"><path d="M1.500 9L7.500 2.500 13.500 9" /></svg></div>
      <div class="sel-row center end">
        <span class="lbl">显示结果</span>
        <div class="ss-btn pv"><svg viewBox="0 0 26 26"><circle cx="10" cy="10" r="8" fill="#dcdcdc" stroke="#bbb" stroke-width="2"/><path d="M16 16l8 8" stroke="#b8b8b8" stroke-width="3.500"/></svg></div>
      </div>
    </div>
  </div>
  <div class="grip"><b class="dd"></b></div>
  <footer class="dlg-foot">
    <button class="btn dis" type="button">确定</button>
    <button class="btn dis" type="button">应用</button>
    <button class="btn pri" type="button">取消</button>
  </footer>
</section>

<svg class="ink" viewBox="0 0 1133 1001">
  <path class="hi" d="M41 700l59 5 67-5 40 3 26 5v22l-26-7-40-2-67 2-59 2z"/>
  <g transform="translate(0 530) scale(.3333)" class="st">
    <path d="M68 355L110 290 145 262 200 250 260 255 300 268 400 285 480 297 600 305 800 305 1000 300 1200 305 1300 315 1400 325 1470 350 1497 385 1500 430 1480 480 1440 520 1380 565 1300 600 1200 625 1050 630 800 640 600 640 400 632 230 630 170 610 120 575 85 530 75 460 72 400 80 285"/>
    <path d="M1332 412L1365 395 1420 355 1560 240"/>
  </g>
  <g transform="translate(520 380) scale(.391 .3333)" class="st">
    <path d="M0 693L35 665 85 620 170 570 295 492 345 445 400 388"/>
    <path d="M383 184L410 192 450 224"/><path d="M517 118V200L524 285"/><path d="M537 102L600 90 597 200 605 228H625"/>
    <path d="M440 298L445 320 470 365 478 402"/><path d="M517 430V462L480 540 450 610 430 632"/>
    <path d="M570 310H693L690 350 660 430 630 487 600 462"/><path d="M578 412L600 440 650 475 680 493 690 475"/>
    <path d="M725 287L800 272 900 235 995 200"/><path d="M932 118L905 220 850 370 785 515 783 490"/><path d="M848 385V702"/>
    <path d="M878 357L1018 355V500L1025 600 1040 650 1035 668"/><path d="M905 472L925 462H995"/><path d="M947 535L990 530 1020 515 1050 503"/>
    <path d="M1140 5L1145 40 1170 75 1195 150 1207 197"/><path d="M1380 138L1378 170 1340 210 1280 245 1220 300 1275 305V440L1283 572 1278 530"/>
    <path d="M1125 292L1215 298"/><path d="M1210 318L1190 370 1150 430 1127 493"/><path d="M1172 422L1230 424 1232 520 1218 585 1205 553"/>
    <path d="M1265 322L1557 320 1553 592 1500 560 1470 520 1432 467"/><path d="M1395 395L1450 382V510L1395 515z"/>
  </g>
</svg>
</body>
</html>
```
FILE: styles.css
```css
*{box-sizing:border-box}
html,body{margin:0;padding:0}
body{width:1133px;height:1001px;overflow:hidden;position:relative;background:#fff;font-family:"Noto Sans","Noto Sans CJK SC",sans-serif;font-size:15px;color:#222}
.defs{position:absolute}
.app{display:flex;flex-direction:column;height:1001px}
.menu{margin-top:2px;height:31px;background:#c8d8d6;display:flex;align-items:center;font-size:14px;white-space:nowrap;flex:none;color:#2a2a2a;overflow:hidden}
.mi{flex:none;padding-bottom:1px}
.mn8{margin-left:-8px}.mm13{margin-left:13px}.mm14{margin-left:14px}.mm15{margin-left:15px}.mm16{margin-left:16px}.mm23{margin-left:23px}
.tb{display:flex;align-items:center;background:#fff;border-bottom:2px solid #e4e4e4;flex:none;overflow:hidden;white-space:nowrap}
.r1{height:41px}.r2{height:42px}.r3{height:42px}.r4{height:42px}
.r5{height:37px;border-bottom:2px solid #a9a9a9}
.blank{height:23px;background:#fff;flex:none}
.ic{width:32px;height:32px;flex:none;display:block}
.ic24{width:24px;height:24px;flex:none;display:block}
.sep{display:block;width:1px;height:30px;background:#dcdcdc;flex:none}
.dot{display:block;width:3px;height:36px;flex:none;background:repeating-linear-gradient(#b5b5b5 0 2px,transparent 2px 4px)}
.dd{display:block;width:0;height:0;border:4px solid transparent;border-top:5px solid #222;border-bottom:0;flex:none}
.dd.low{align-self:flex-end;margin-bottom:7px}
.m1{margin-left:1px}.m2{margin-left:2px}.m3{margin-left:3px}.m4{margin-left:4px}.m5{margin-left:5px}.m6{margin-left:6px}.m7{margin-left:7px}.m8{margin-left:8px}.m9{margin-left:9px}.m10{margin-left:10px}.m11{margin-left:11px}
.m332{margin-left:332px}.m370{margin-left:370px}.m375{margin-left:375px}
.mn10{margin-left:-10px}.mn9{margin-left:-9px}.mn7{margin-left:-7px}
.search{margin-left:368px;width:117px;height:24px;border:1px solid #b4b4b4;display:flex;align-items:center;justify-content:flex-end;padding-right:4px;flex:none}
.mag{width:16px;height:16px}
.more{width:10px;height:38px;display:flex;flex-direction:column;align-items:center;justify-content:space-between;flex:none;padding-bottom:4px}
.chev{font-size:13px;line-height:14px;font-weight:700;font-family:"Liberation Sans",sans-serif}
.bigA{width:32px;text-align:center;font:700 36px/36px "Liberation Serif",serif;color:#333;flex:none}
.tol{width:36px;height:36px;display:flex;flex-direction:column;align-items:center;flex:none;font:16px/16px "Liberation Sans",sans-serif;color:#333}
.tol em{font-style:normal;color:#333}
.tol span{color:#a33a3a;transform:scaleX(.75);font-weight:700}
.bino{width:28px;height:18px;flex:none}
.sel{width:80px;height:24px;border:1px solid #a9a9a9;font-size:15px;line-height:22px;padding-left:2px;overflow:hidden;flex:none}
.hl{width:24px;height:36px;background:#c5dbd8;display:flex;align-items:center;flex:none}
.viewport{flex:1;position:relative;background:linear-gradient(#22224d 0,#1f3560 17%,#18487a 42%,#125a88 68%,#0f6896 100%);overflow:hidden}
.scene{position:absolute;left:0;top:0;width:1133px;height:741px}
.tz{font:11px "Liberation Sans",sans-serif;fill:#1838c8}
.tzc{font:11px "Liberation Sans",sans-serif;fill:#2c4ae8}
.tyc{font:11px "Liberation Sans",sans-serif;fill:#3a9a3a}
.txc{font:11px "Liberation Sans",sans-serif;fill:#c83030}
.logo{position:absolute;left:930px;top:655px;color:#85b5d2;width:190px}
.logo-cn{font:700 38px/46px "Noto Sans CJK SC",sans-serif;letter-spacing:1.500px;white-space:nowrap;height:46px;overflow:visible}
.logo-cn strong{font:700 44px/46px "Liberation Sans",sans-serif;margin-right:2px}
.logo-en{font:700 12.500px/14px "Liberation Sans",sans-serif;letter-spacing:5px;white-space:nowrap;margin-top:3px}
.dialog{position:absolute;left:41px;top:27px;width:380px;height:974px;background:#e6e6e6;display:flex;flex-direction:column}
.dlg-title{height:27px;background:#5c857f;display:flex;align-items:center;padding:0 10px;flex:none}
.gear{width:14px;height:14px}
.dlg-name{margin-left:11px;font-size:15.500px;color:#eaf1ef;flex:1;padding-bottom:2px}
.rst{width:14px;height:14px;margin-right:10px}
.cls{width:14px;height:14px}
.dlg-body{padding:4px 6px 0;display:flex;flex-direction:column;gap:4px;flex:none}
.sec{background:#fff;border-bottom:2px solid #ccc;padding:0 9px 6px}
.sec-main{padding-bottom:7px}
.sec-head{height:28px;display:flex;align-items:center;justify-content:space-between;font-size:18px;color:#3a96cf;margin-left:-2px;margin-right:-3px}
.sec-head span,.g-head span,.g-reuse span{padding-bottom:2px}
.cv{width:15px;height:11px;fill:none;stroke:#2a87b8;stroke-width:2.400;flex:none;overflow:visible}
.cv-s{width:13px;height:10px;stroke-width:2.100}
.sel-row{display:flex;height:32px;margin-top:6px;justify-content:space-between}
.sel-row.center{align-items:center}
.sel-row.end{justify-content:flex-end}
.sel-bar{width:316px;background:#fcd46c;display:flex;align-items:center;padding-left:2px;padding-bottom:2px;font-size:15px;color:#222}
.sel-btn{width:32px;background:#fbeab0;border:1px solid #f7d36e;display:flex;align-items:center;justify-content:center}
.sel-btn svg{width:24px;height:24px}
.ok{width:14px;height:12px;fill:none;stroke:#1fbb3a;stroke-width:2.600;margin-right:4px;flex:none}
.ok-p{margin-left:2px}
.lbl{font-size:15px;color:#222;padding-bottom:2px}
.lbl-off{font-size:15px;color:#aaa;padding-bottom:2px}
.grow{flex:1}
.mini{width:24px;height:24px;border:1px solid #b0b0b0;background:#fff;flex:none;display:flex;align-items:center;justify-content:center}
.mini svg{width:22px;height:22px}
.mini-off{border-color:#ccc;margin-right:2px}
.pt-combo{width:53px;height:32px;border:1px solid #b0b0b0;margin-left:2px;display:flex;align-items:center;justify-content:space-between;padding:0 6px;flex:none}
.pt-combo svg{width:22px;height:22px;margin-left:2px}
.f-row{display:flex;align-items:center;justify-content:space-between;height:28px;margin-top:6px}
.combo{width:163px;height:28px;border:1px solid #a9a9a9;background:#fff;display:flex;align-items:center;padding:0 6px 0 4px;font-size:15px;color:#222;flex:none}
.combo span{padding-bottom:2px}
.combo-off{color:#777}
.combo-off .dd{border-top-color:#aaa}
.grid{width:16px;height:16px;margin-right:4px;margin-left:2px}
.grp{background:#f0f6f6;border:1px solid #d5dcdc;padding:0 8px}
.g-head{height:24px;display:flex;align-items:center;justify-content:space-between;color:#3a96cf;font-size:15px;margin-right:-2px}
.g-dir1{margin-top:4px;height:190px}
.g-dir2{margin-top:2px;height:66px}
.g-inst{margin-top:2px;height:74px}
.g-set{height:95px}
.vec-row{display:flex;align-items:center;height:32px;margin-top:8px;margin-bottom:2px}
.ast{color:#e01020;font-size:20px;line-height:20px;margin-left:7px;margin-right:3px;height:16px;font-family:"Liberation Sans",sans-serif}
.vbtn{width:32px;height:32px;background:#9bcbe6;border:1px solid #5aaedb;margin-left:2px;display:flex;align-items:center;justify-content:center;flex:none}
.vbtn svg{width:28px;height:28px}
.vdd{width:21px;height:32px;background:#9bcbe6;border:1px solid #5aaedb;border-left:0;display:flex;align-items:center;justify-content:center;flex:none}
.g-row{display:flex;align-items:center;justify-content:space-between;height:28px;margin-bottom:2px}
.num{font-size:15px;letter-spacing:.3px}
.combo .swatch{width:43px;height:24px;background:#f0f6f6;margin-left:auto;margin-right:7px;padding:0}
.unit{font-size:15px;margin-right:19px}
.chk{display:flex;align-items:center;height:18px;gap:4px}
.chk span{padding-bottom:2px}
.box{display:block;width:18px;height:18px;border:1px solid #333;background:#fff;flex:none}
.box.off{border-color:#ddd}
.chk-sym{margin-top:4px}
.chk-d2{margin-top:11px}
.chk-fr{margin-top:11px}
.i-row{display:flex;align-items:center;height:32px;margin-top:8px}
.cross{width:32px;height:32px;border:1px solid #aaa;background:#fff;display:flex;align-items:center;justify-content:center}
.cross svg{width:22px;height:22px}
.ss-row{display:flex;align-items:center;height:39px;gap:4px}
.ss-btn{width:32px;height:32px;border:1px solid #d8d8d8;background:#fff;display:flex;align-items:center;justify-content:center;flex:none}
.ss-btn svg{width:24px;height:24px}
.pv{margin-left:2px}
.g-stag{margin-top:5px;margin-bottom:0}
.g-reuse{margin-top:2px;height:27px;display:flex;align-items:center;justify-content:space-between;color:#3a96cf;font-size:15px;padding-right:6px}
.grip{height:17px;margin:0 6px;display:flex;align-items:center;justify-content:center;border-bottom:1px solid #d4d4d4;flex:none}
.grip .dd{border-width:5px;border-bottom:0;margin-right:1px}
.dlg-foot{display:flex;justify-content:flex-end;gap:5px;padding:9px 16px 0 0}
.btn{width:60px;height:28px;border:2px solid #b4b4b4;font:15px "Noto Sans CJK SC",sans-serif;padding:0 0 4px;background:#dedede}
.btn.dis{color:#aaa}
.btn.pri{background:#c9cacd;color:#222}
.ink{position:absolute;left:0;top:0;width:1133px;height:1001px;pointer-events:none}
.hi{fill:#ff0;mix-blend-mode:multiply}
.st path{fill:none;stroke:#f00;stroke-width:2.500px;vector-effect:non-scaling-stroke;stroke-linejoin:round;stroke-linecap:round}
```
